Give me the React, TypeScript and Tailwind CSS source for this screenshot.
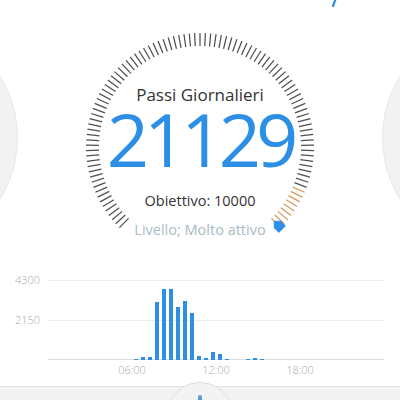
import React from 'react';

const bars: Record<number, number> = {
  12: 1, 13: 3, 14: 3, 15: 58, 16: 71, 17: 71, 18: 53, 19: 59, 20: 47,
  21: 4, 22: 2, 23: 8, 24: 6, 25: 1.5, 28: 1, 29: 2, 30: 1,
};

const Gauge = () => {
  const ticks = [];
  const count = 100;
  for (let i = 0; i <= count; i++) {
    // from 135deg (bottom-left) clockwise 270deg to 45deg (bottom-right)
    const a = ((135 + (270 * i) / count) * Math.PI) / 180;
    const r1 = 101;
    const r2 = 114;
    ticks.push(
      <line
        key={i}
        x1={120 + r1 * Math.cos(a)}
        y1={120 + r1 * Math.sin(a)}
        x2={120 + r2 * Math.cos(a)}
        y2={120 + r2 * Math.sin(a)}
        stroke={i > count - 9 ? '#d49a5e' : '#4f4f4f'}
        strokeWidth={1.25}
      />
    );
  }
  const ma = (45 * Math.PI) / 180;
  const mx = 120 + 111 * Math.cos(ma);
  const my = 120 + 111 * Math.sin(ma);
  return (
    <svg className="absolute inset-0" width="240" height="240" viewBox="0 0 240 240">
      {ticks}
      <path
        d="M0 -6 L4.5 -1.5 L4.5 5 L-4.5 5 L-4.5 -1.5 Z"
        fill="#2d8ee6"
        stroke="#2d8ee6"
        strokeWidth="1"
        strokeLinejoin="round"
        transform={`translate(${mx} ${my}) rotate(-45)`}
      />
    </svg>
  );
};

export default function App() {
  return (
    <div
      className="relative w-[400px] h-[400px] overflow-hidden bg-white flex flex-col"
      style={{ fontFamily: '"Open Sans", "Liberation Sans", sans-serif' }}
    >
      {/* bit of a cut-off icon at the top */}
      <svg className="absolute left-[328px] top-0" width="12" height="8" viewBox="0 0 12 8">
        <path d="M8 -2 L5 6" stroke="#2d8ee6" strokeWidth="2.2" strokeLinecap="round" />
      </svg>

      {/* carousel */}
      <div className="flex items-start h-[258px] shrink-0">
        <div className="w-[235px] h-[235px] shrink-0 ml-[-217px] mt-[20px] rounded-full bg-[#f2f2f2] border border-[#e8e8e8]" />
        <div className="relative w-[240px] h-[240px] shrink-0 ml-[62px] mt-[27px] flex flex-col items-center">
          <Gauge />
          <div className="mt-[57px] text-[17px] leading-[22px] text-[#333]">Passi Giornalieri</div>
          <div className="mt-[3px] text-[74px] leading-[60px] tracking-[-5px] text-[#2d8ee6]">21129</div>
          <div className="mt-[22px] text-[14.5px] leading-[20px] text-[#333]">Obiettivo: 10000</div>
          <div className="mt-[9px] text-[14.5px] leading-[20px] text-[#a9bbc3]">Livello; Molto attivo</div>
        </div>
        <div className="w-[235px] h-[235px] shrink-0 ml-[62px] mt-[20px] rounded-full bg-[#f2f2f2] border border-[#e8e8e8]" />
      </div>

      {/* chart */}
      <div className="flex items-start mt-[22px]">
        <div className="w-[48px] pr-[8px] -mt-[8px] flex flex-col items-end gap-[24px] text-[11px] leading-[16px] font-light text-[#a8adb0]">
          <div>4300</div>
          <div>2150</div>
        </div>
        <div className="w-[336px]">
          <div className="relative h-[80px] border-t border-[#ededed]">
            <div className="absolute left-0 right-0 top-[39px] border-t border-[#ededed]" />
            <div className="absolute left-0 right-0 bottom-0 border-t border-[#dcdcdc]" />
            <div className="absolute inset-0 flex items-end">
              {Array.from({ length: 48 }).map((_, i) => (
                <div key={i} className="w-[7px] flex justify-center">
                  {bars[i] ? (
                    <div className="w-[4px] bg-[#2f8fe2]" style={{ height: bars[i] }} />
                  ) : null}
                </div>
              ))}
            </div>
          </div>
          <div className="flex text-[11px] leading-[20px] font-light text-[#a8adb0]">
            <div className="ml-[52px] w-[64px] text-center">06:00</div>
            <div className="ml-[20px] w-[64px] text-center">12:00</div>
            <div className="ml-[20px] w-[64px] text-center">18:00</div>
          </div>
        </div>
      </div>

      {/* bottom nav */}
      <div className="mt-auto h-[14px] bg-[#f3f3f3] border-t border-[#e3e3e3] flex justify-center">
        <div className="w-[66px] h-[66px] mt-[-5px] rounded-full border border-[#dedede] bg-[#f3f3f3] flex justify-center shrink-0">
          <div className="mt-[12px] w-[4px] h-[6px] rounded-t-full bg-[#5b9fd6]" />
        </div>
      </div>
    </div>
  );
}
